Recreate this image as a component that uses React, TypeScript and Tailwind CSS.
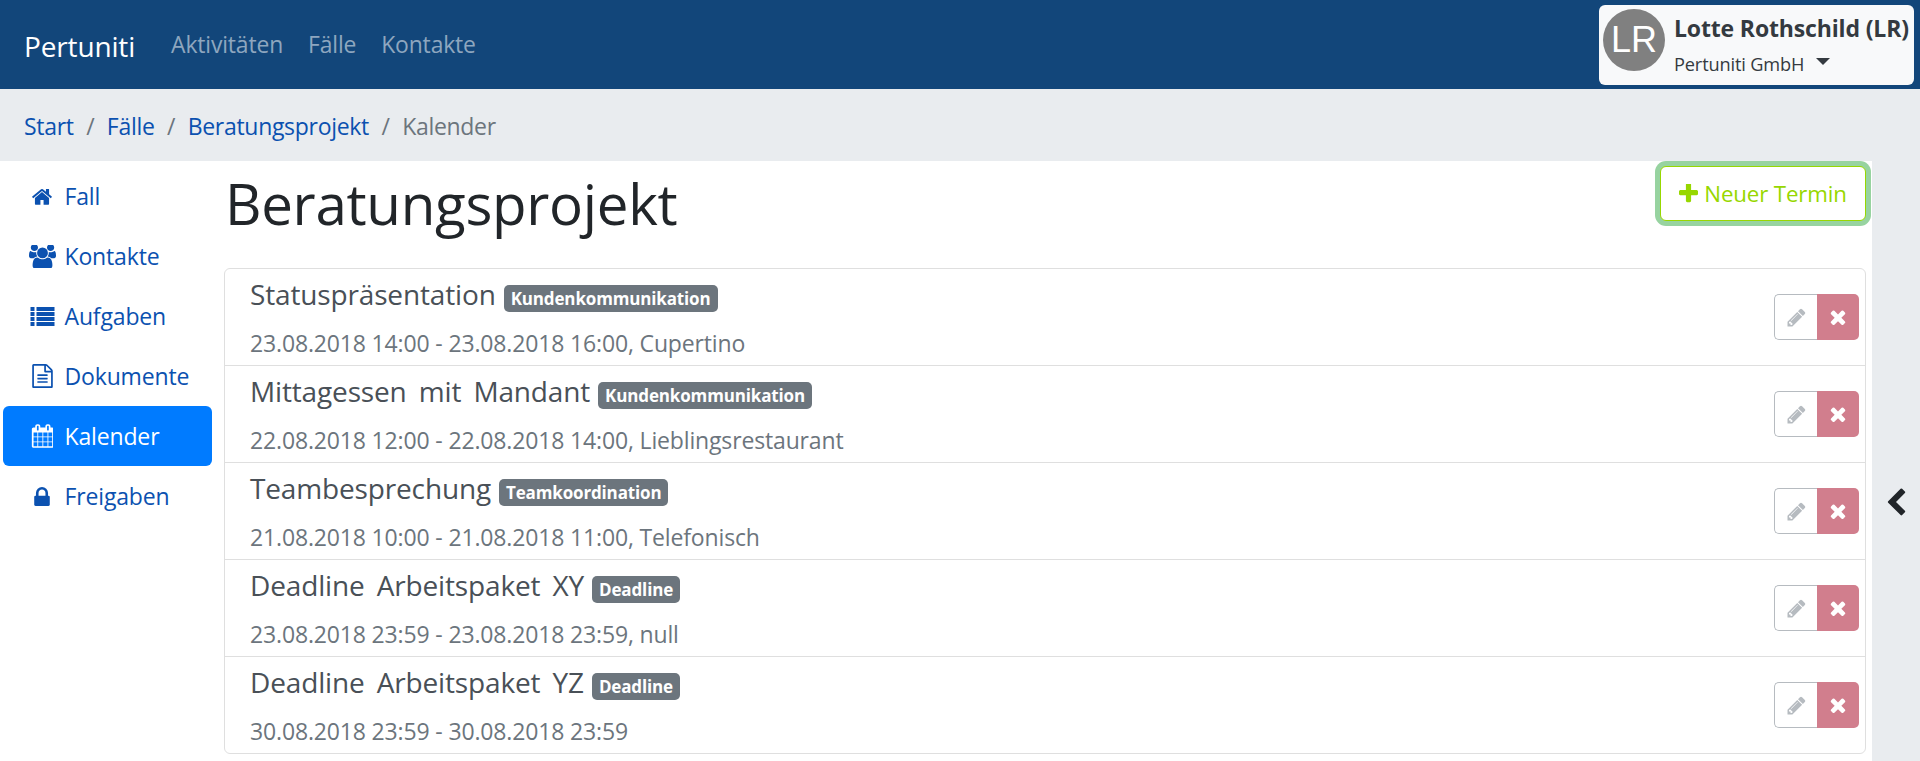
import type { ReactNode } from "react";

const Fa = ({ d, box, className }: { d: string; box: string; className: string }) => (
  <svg viewBox={box} className={className} fill="currentColor">
    <path d={d} />
  </svg>
);

const icons = {
  home: "M1472 992v480q0 26-19 45t-45 19h-384v-384h-256v384h-384q-26 0-45-19t-19-45v-480q0-1 .5-3t.5-3l575-474 575 474q1 2 1 6zm223-69l-62 74q-8 9-21 11h-3q-13 0-21-7l-692-577-692 577q-12 8-24 7-13-2-21-11l-62-74q-8-10-7-23.5t11-21.5l719-599q32-26 76-26t76 26l244 204v-195q0-14 9-23t23-9h192q14 0 23 9t9 23v408l219 182q10 8 11 21.5t-7 23.5z",
  users: "M529 896q-162 5-265 128h-134q-82 0-138-40.5t-56-118.5q0-353 124-353 6 0 43.5 21t97.5 42.5 119 21.5q67 0 133-23-5 37-5 66 0 139 81 256zm1071 637q0 120-73 189.5t-194 69.5h-874q-121 0-194-69.5t-73-189.5q0-53 3.5-103.5t14-109 26.5-108.5 43-97.5 62-81 85.5-53.5 111.5-20q10 0 43 21.5t73 48 107 48 135 21.5 135-21.5 107-48 73-48 43-21.5q61 0 111.5 20t85.5 53.5 62 81 43 97.5 26.5 108.5 14 109 3.5 103.5zm-1024-1277q0 106-75 181t-181 75-181-75-75-181 75-181 181-75 181 75 75 181zm704 384q0 159-112.5 271.5t-271.5 112.5-271.5-112.5-112.5-271.5 112.5-271.5 271.5-112.5 271.5 112.5 112.5 271.5zm576 225q0 78-56 118.5t-138 40.5h-134q-103-123-265-128 81-117 81-256 0-29-5-66 66 23 133 23 59 0 119-21.5t97.5-42.5 43.5-21q124 0 124 353zm-128-609q0 106-75 181t-181 75-181-75-75-181 75-181 181-75 181 75 75 181z",
  list: "M0 0h4v4H0zM6 0h18v4H6zM0 5h4v4H0zM6 5h18v4H6zM0 10h4v4H0zM6 10h18v4H6zM0 15h4v4H0zM6 15h18v4H6z",
  file: "M1596 380q28 28 48 76t20 88v1152q0 40-28 68t-68 28h-1344q-40 0-68-28t-28-68v-1600q0-40 28-68t68-28h896q40 0 88 20t76 48zm-444-244v376h376q-10-29-22-41l-313-313q-12-12-41-22zm384 1528v-1024h-416q-40 0-68-28t-28-68v-416h-768v1536h1280zm-1024-864q0-14 9-23t23-9h704q14 0 23 9t9 23v64q0 14-9 23t-23 9h-704q-14 0-23-9t-9-23v-64zm736 224q14 0 23 9t9 23v64q0 14-9 23t-23 9h-704q-14 0-23-9t-9-23v-64q0-14 9-23t23-9h704zm0 256q14 0 23 9t9 23v64q0 14-9 23t-23 9h-704q-14 0-23-9t-9-23v-64q0-14 9-23t23-9h704z",
  calendar: "M192 1664h288v-288h-288v288zm352 0h320v-288h-320v288zm-352-352h288v-320h-288v320zm352 0h320v-320h-320v320zm-352-384h288v-288h-288v288zm736 736h320v-288h-320v288zm-384-736h320v-288h-320v288zm768 736h288v-288h-288v288zm-384-352h320v-320h-320v320zm-352-864v-288q0-13-9.5-22.5t-22.5-9.5h-64q-13 0-22.5 9.5t-9.5 22.5v288q0 13 9.5 22.5t22.5 9.5h64q13 0 22.5-9.5t9.5-22.5zm736 864h288v-320h-288v320zm-384-384h320v-288h-320v288zm384 0h288v-288h-288v288zm32-480v-288q0-13-9.5-22.5t-22.5-9.5h-64q-13 0-22.5 9.5t-9.5 22.5v288q0 13 9.5 22.5t22.5 9.5h64q13 0 22.5-9.5t9.5-22.5zm384-64v1280q0 52-38 90t-90 38h-1408q-52 0-90-38t-38-90v-1280q0-52 38-90t90-38h128v-96q0-66 47-113t113-47h64q66 0 113 47t47 113v96h384v-96q0-66 47-113t113-47h64q66 0 113 47t47 113v96h128q52 0 90 38t38 90z",
  lock: "M520 768h512v-192q0-106-75-181t-181-75-181 75-75 181v192zm832 96v576q0 40-28 68t-68 28h-960q-40 0-68-28t-28-68v-576q0-40 28-68t68-28h32v-192q0-184 132-316t316-132 316 132 132 316v192h32q40 0 68 28t28 68z",
  pencil: "M491 1536l91-91-235-235-91 91v107h128v128h107zm523-928q0-22-22-22-10 0-17 7l-542 542q-7 7-7 17 0 22 22 22 10 0 17-7l542-542q7-7 7-17zm-54-192l416 416-832 832h-416v-416zm683 96q0 53-37 90l-166 166-416-416 166-165q36-38 90-38 53 0 91 38l235 234q37 39 37 91z",
  times: "M1490 1322q0 40-28 68l-136 136q-28 28-68 28t-68-28l-294-294-294 294q-28 28-68 28t-68-28l-136-136q-28-28-28-68t28-68l294-294-294-294q-28-28-28-68t28-68l136-136q28-28 68-28t68 28l294 294 294-294q28-28 68-28t68 28l136 136q28 28 28 68t-28 68l-294 294 294 294q28 28 28 68z",
  plus: "M1600 736v192q0 40-28 68t-68 28h-416v416q0 40-28 68t-68 28h-192q-40 0-68-28t-28-68v-416h-416q-40 0-68-28t-28-68v-192q0-40 28-68t68-28h416v-416q0-40 28-68t68-28h192q40 0 68 28t28 68v416h416q40 0 68 28t28 68z",
  chevron: "M1427 301l-531 531 531 531q19 19 19 45t-19 45l-166 166q-19 19-45 19t-45-19l-742-742q-19-19-19-45t19-45l742-742q19-19 45-19t45 19l166 166q19 19 19 45t-19 45z",
};

const sideItems: { label: string; icon: ReactNode; active?: boolean }[] = [
  { label: "Fall", icon: <Fa d={icons.home} box="0 128 1792 1408" className="w-[22px] h-[18px]" /> },
  { label: "Kontakte", icon: <Fa d={icons.users} box="-64 128 1920 1536" className="w-[27px] h-[23px]" /> },
  { label: "Aufgaben", icon: <Fa d={icons.list} box="0 0 24 19" className="w-[25px] h-[19px]" /> },
  { label: "Dokumente", icon: <Fa d={icons.file} box="128 0 1536 1792" className="w-[21px] h-[24px]" /> },
  { label: "Kalender", icon: <Fa d={icons.calendar} box="0 0 1664 1792" className="w-[22px] h-[24px]" />, active: true },
  { label: "Freigaben", icon: <Fa d={icons.lock} box="200 128 1152 1408" className="w-[16px] h-[19px]" /> },
];

const events = [
  { title: "Statuspräsentation", tag: "Kundenkommunikation", info: "23.08.2018 14:00 - 23.08.2018 16:00, Cupertino" },
  { title: "Mittagessen mit Mandant", tag: "Kundenkommunikation", info: "22.08.2018 12:00 - 22.08.2018 14:00, Lieblingsrestaurant" },
  { title: "Teambesprechung", tag: "Teamkoordination", info: "21.08.2018 10:00 - 21.08.2018 11:00, Telefonisch" },
  { title: "Deadline Arbeitspaket XY", tag: "Deadline", info: "23.08.2018 23:59 - 23.08.2018 23:59, null" },
  { title: "Deadline Arbeitspaket YZ", tag: "Deadline", info: "30.08.2018 23:59 - 30.08.2018 23:59" },
];

const App = () => {
  return (
    <div className="min-h-screen flex flex-col bg-[#e9ecef] font-['Open_Sans',sans-serif] text-[23px] tracking-[-0.15px] overflow-hidden">
      <header className="h-[89px] bg-[#12467a] flex items-center pl-[24px] pr-[6px]">
        <a className="text-white text-[28px] mr-[36px] mt-[2px]">Pertuniti</a>
        <nav className="flex gap-[25px] text-[#8ea6bf] text-[22.9px] mt-[2px]">
          <a>Aktivitäten</a>
          <a>Fälle</a>
          <a>Kontakte</a>
        </nav>
        <div className="ml-auto w-[315px] h-[80px] bg-[#f8f9fa] rounded-[6px] flex pl-[4px] pt-[4px] gap-[9px]">
          <div className="w-[62px] h-[62px] rounded-full bg-[#808080] text-white flex items-center justify-center font-['Liberation_Sans',sans-serif] text-[36px] tracking-normal">
            LR
          </div>
          <div className="flex flex-col text-[#343a40]">
            <div className="font-bold text-[23px] leading-[36px] mt-[1px] whitespace-nowrap">Lotte Rothschild (LR)</div>
            <div className="flex items-center text-[18.2px] leading-[30px] mt-[3px]">
              Pertuniti GmbH
              <span className="ml-[12px] mb-[4px] border-x-[7px] border-t-[7px] border-x-transparent border-t-[#343a40]" />
            </div>
          </div>
        </div>
      </header>

      <div className="h-[72px] flex items-center gap-[12.5px] pl-[24px] pt-[3px] text-[#0b51b0] tracking-[-0.3px]">
        <a>Start</a>
        <span className="text-[#6c757d]">/</span>
        <a>Fälle</a>
        <span className="text-[#6c757d]">/</span>
        <a>Beratungsprojekt</a>
        <span className="text-[#6c757d]">/</span>
        <span className="text-[#6c757d]">Kalender</span>
      </div>

      <div className="flex-1 flex">
        <div className="w-[1872px] bg-white flex">
          <aside className="w-[224px] shrink-0 pl-[3px] pt-[5px]">
            {sideItems.map((item) => (
              <a
                key={item.label}
                className={`w-[209px] h-[60px] flex items-center rounded-[6px] ${
                  item.active ? "bg-[#007bff] text-white" : "text-[#0b51b0]"
                }`}
              >
                <span className="w-[61.5px] pl-[17px] flex justify-center">{item.icon}</span>
                {item.label}
              </a>
            ))}
          </aside>

          <main className="flex-1 pr-[6px]">
            <div className="h-[107px] flex items-start justify-between">
              <h1 className="text-[56.5px] leading-[86px] ml-[1px] text-[#212529] tracking-[-0.3px]">Beratungsprojekt</h1>
              <button className="w-[206px] h-[55px] mt-[5px] rounded-[6px] border border-[#97d700] bg-white text-[#97d700] text-[22.3px] ring-[5px] ring-[#97d3a0] flex items-center justify-center gap-[6px]">
                <Fa d={icons.plus} box="192 192 1408 1408" className="w-[19px] h-[19px]" />
                Neuer Termin
              </button>
            </div>

            <ul className="border border-[#dfdfdf] rounded-[6px]">
              {events.map((ev, i) => (
                <li
                  key={ev.title}
                  className={`flex items-center justify-between pl-[25px] pr-[6px] ${
                    i < events.length - 1 ? "h-[97px] border-b border-[#dfdfdf]" : "h-[96px]"
                  }`}
                >
                  <div className="text-[#495057]">
                    <div className="flex items-center gap-[8px] h-[52px]">
                      <span className="text-[28px] [word-spacing:5px] -mt-[7px]">{ev.title}</span>
                      <span className="h-[27px] px-[7px] mt-[3px] rounded-[5px] bg-[#6c757d] text-white font-bold text-[17px] flex items-center">
                        {ev.tag}
                      </span>
                    </div>
                    <div className="h-[40px] flex items-center text-[#6c757d]">{ev.info}</div>
                  </div>
                  <div className="flex h-[46px]">
                    <span className="w-[43px] flex items-center justify-center border border-r-0 border-[#b6bbc0] rounded-l-[5px] text-[#b6bbc0]">
                      <Fa d={icons.pencil} box="0 0 1792 1792" className="w-[21px] h-[21px]" />
                    </span>
                    <span className="w-[42px] flex items-center justify-center bg-[#d17e8d] rounded-r-[5px] text-white">
                      <Fa d={icons.times} box="0 0 1792 1792" className="w-[22px] h-[22px]" />
                    </span>
                  </div>
                </li>
              ))}
            </ul>
          </main>
        </div>

        <div className="flex-1 flex items-start justify-center pt-[327px] text-[#212529]">
          <Fa d={icons.chevron} box="0 0 1792 1792" className="w-[30px] h-[30px]" />
        </div>
      </div>
    </div>
  );
};

export default App;
